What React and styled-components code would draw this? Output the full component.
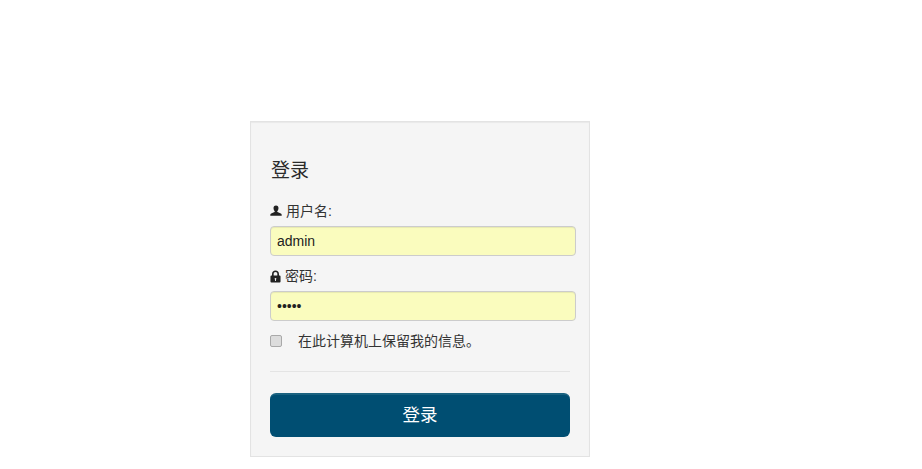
import React from 'react';
import styled, { createGlobalStyle } from 'styled-components';

const GlobalStyle = createGlobalStyle`
    html, body {
        margin: 0;
        padding: 0;
        background: #fff;
    }
    body {
        font-family: "Liberation Sans", "Noto Sans CJK SC", sans-serif;
        font-size: 14px;
        color: #333;
    }
`;

const UserIcon = () => (
    <svg width="12" height="12" viewBox="0 0 12 12">
        <path fill="#222" d="M6 0.5c-1.7 0-2.6 1.2-2.5 2.8.1 1.2.5 2.2 1.2 2.9.2.3.1.7-.2.9L1.2 8.6C.6 8.9.3 9.4.3 10.100v.6h11.400v-.6c0-.7-.3-1.200-.9-1.500L7.500 7.100c-.3-.2-.4-.6-.2-.9.7-.7 1.100-1.700 1.200-2.900C8.600 1.700 7.700.5 6 .5z" />
    </svg>
);

const LockIcon = () => (
    <svg width="11" height="13" viewBox="0 0 12 14">
        <path fill="#222" fillRule="evenodd" d="M6 .5C3.700.5 2.200 2 2.200 4.300V6H1.500C.9 6 .5 6.400.5 7v5.500c0 .6.4 1 1 1h9c.6 0 1-.4 1-1V7c0-.6-.4-1-1-1h-.7V4.300C9.800 2 8.300.5 6 .5zM4 6V4.300C4 3 4.700 2.200 6 2.200S8 3 8 4.300V6H4zm2 2.500c.6 0 1 .4 1 1 0 .4-.2.7-.5.9V12h-1v-1.600c-.3-.2-.5-.5-.5-.9 0-.6.4-1 1-1z" />
    </svg>
);

export default function App() {
    return (
        <Page>
            <GlobalStyle />
            <LoginPanel>
                <Title>登录</Title>
                <FieldLabel><UserIcon /> 用户名:</FieldLabel>
                <TextInput type="text" value="admin" readOnly />
                <FieldLabel><LockIcon /> 密码:</FieldLabel>
                <TextInput type="password" value="admin" readOnly />
                <RememberRow>
                    <Checkbox />
                    <RememberText>在此计算机上保留我的信息。</RememberText>
                </RememberRow>
                <Divider />
                <SubmitButton type="button">登录</SubmitButton>
            </LoginPanel>
        </Page>
    );
}

const Page = styled.div`
    padding: 121px 0 12px 250px;
`;

const LoginPanel = styled.form`
    box-sizing: border-box;
    width: 340px;
    height: 336px;
    padding: 37px 19px 0;
    background: #f5f5f5;
    border: 1px solid #e3e3e3;
    box-shadow: inset 0 1px 1px rgba(0, 0, 0, 0.05);
`;

const Title = styled.h2`
    margin: 0 0 18px;
    padding-left: 1px;
    font-size: 19px;
    line-height: 24px;
    font-weight: 400;
    color: #2a2a2a;
`;

const FieldLabel = styled.label`
    display: flex;
    align-items: center;
    gap: 4px;
    height: 20px;
    margin-bottom: 5px;
    font-size: 14px;
    line-height: 20px;
    color: #333;
`;

const TextInput = styled.input`
    display: block;
    box-sizing: border-box;
    width: 306px;
    height: 30px;
    margin: 0 0 10px;
    padding: 4px 6px;
    font-family: "Liberation Sans", sans-serif;
    font-size: 14px;
    color: #222;
    background: #fafcbe;
    border: 1px solid #ccc;
    border-radius: 4px;
    box-shadow: inset 0 1px 1px rgba(0, 0, 0, 0.075);
    outline: none;
`;

const RememberRow = styled.div`
    display: flex;
    align-items: center;
    gap: 16px;
    height: 20px;
    font-size: 14px;
    color: #333;
`;

const RememberText = styled.span`
    padding-bottom: 2px;
`;

const Checkbox = styled.span`
    box-sizing: border-box;
    width: 12px;
    height: 12px;
    background: #dcdcdc;
    border: 1px solid #a9a9a9;
    border-radius: 2px;
`;

const Divider = styled.hr`
    width: 300px;
    height: 1px;
    margin: 20px 0 21px;
    border: 0;
    background: #e4e4e4;
`;

const SubmitButton = styled.button`
    display: block;
    width: 300px;
    height: 44px;
    padding: 0 0 6px;
    font-family: "Liberation Sans", "Noto Sans CJK SC", sans-serif;
    font-size: 17.5px;
    color: #fff;
    background: #004e72;
    border: 0;
    border-top: 2px solid #1a6280;
    border-radius: 6px;
`;
